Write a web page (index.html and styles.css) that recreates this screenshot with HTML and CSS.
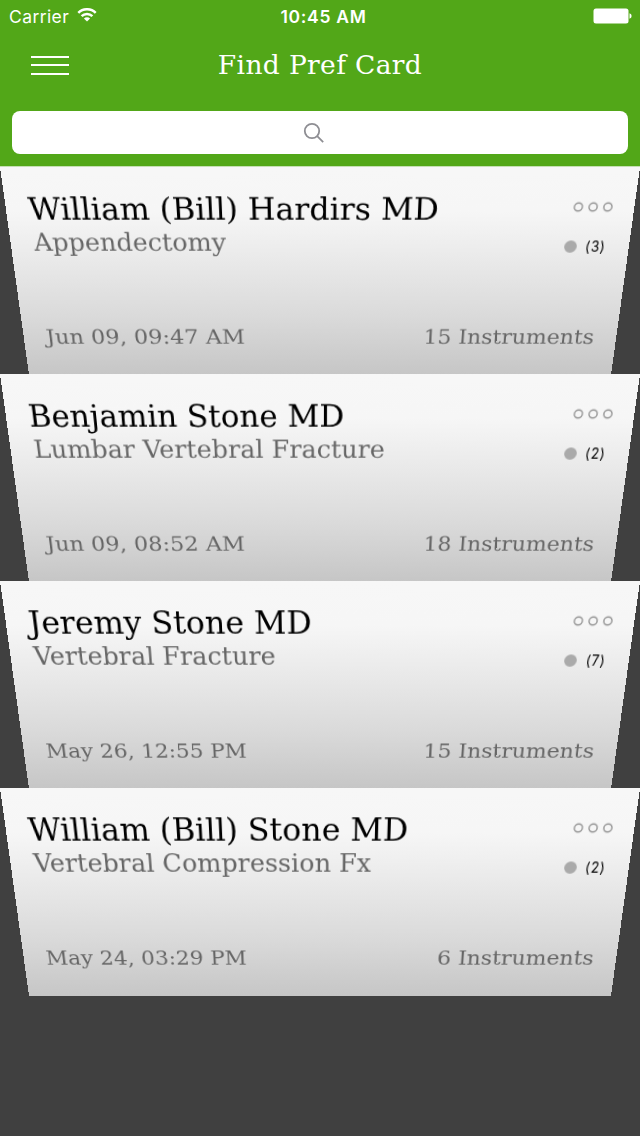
FILE: index.html
```
<!DOCTYPE html>
<html lang="en">
<head>
  <meta charset="UTF-8" />
  <meta name="viewport" content="width=device-width, initial-scale=1.0" />
  <title>Find Pref Card</title>
  <link rel="stylesheet" href="styles.css">
</head>
<body>
  <header class="header">
    <div class="status-bar">
      <div class="carrier">
        <span>Carrier</span>
        <svg class="wifi" viewBox="0 0 20 14" width="20" height="14">
          <path d="M1.3 4.8a12.4 12.4 0 0 1 17.4 0" />
          <path d="M4.6 8.1a7.7 7.7 0 0 1 10.8 0" />
          <path class="dot" d="M6.9 10.5a4.4 4.4 0 0 1 6.2 0L10 13.6z" />
        </svg>
      </div>
      <span class="time">10:45 AM</span>
      <div class="battery">
        <svg viewBox="0 0 39 16" width="39" height="16">
          <rect x="0.5" y="0.5" width="35" height="15" rx="2.5" />
          <path d="M36.5 5.2a2.9 2.9 0 0 1 0 5.6z" />
        </svg>
      </div>
    </div>
    <div class="nav-bar">
      <button class="menu"><span></span><span></span><span></span></button>
      <h1>Find Pref Card</h1>
    </div>
    <div class="search">
      <svg viewBox="0 0 22 22" width="22" height="22">
        <circle cx="9" cy="9" r="7.2" />
        <path d="M14.2 14.2l6 5.9" />
      </svg>
    </div>
  </header>

  <main class="cards">
    <article class="card">
      <div class="top">
        <h2>William (Bill) Hardirs MD</h2>
        <svg class="dots" viewBox="0 0 40 10" width="40" height="10">
          <ellipse cx="5" cy="5" rx="4.1" ry="3.7" />
          <ellipse cx="20" cy="5" rx="4.1" ry="3.7" />
          <ellipse cx="35" cy="5" rx="4.1" ry="3.7" />
        </svg>
      </div>
      <div class="middle">
        <p class="procedure">Appendectomy</p>
        <div class="count"><i></i><span>(3)</span></div>
      </div>
      <div class="bottom">
        <span class="date">Jun 09, 09:47 AM</span>
        <span class="instruments">15 Instruments</span>
      </div>
    </article>

    <article class="card">
      <div class="top">
        <h2>Benjamin Stone MD</h2>
        <svg class="dots" viewBox="0 0 40 10" width="40" height="10">
          <ellipse cx="5" cy="5" rx="4.1" ry="3.7" />
          <ellipse cx="20" cy="5" rx="4.1" ry="3.7" />
          <ellipse cx="35" cy="5" rx="4.1" ry="3.7" />
        </svg>
      </div>
      <div class="middle">
        <p class="procedure">Lumbar Vertebral Fracture</p>
        <div class="count"><i></i><span>(2)</span></div>
      </div>
      <div class="bottom">
        <span class="date">Jun 09, 08:52 AM</span>
        <span class="instruments">18 Instruments</span>
      </div>
    </article>

    <article class="card">
      <div class="top">
        <h2>Jeremy Stone MD</h2>
        <svg class="dots" viewBox="0 0 40 10" width="40" height="10">
          <ellipse cx="5" cy="5" rx="4.1" ry="3.7" />
          <ellipse cx="20" cy="5" rx="4.1" ry="3.7" />
          <ellipse cx="35" cy="5" rx="4.1" ry="3.7" />
        </svg>
      </div>
      <div class="middle">
        <p class="procedure">Vertebral Fracture</p>
        <div class="count"><i></i><span>(7)</span></div>
      </div>
      <div class="bottom">
        <span class="date">May 26, 12:55 PM</span>
        <span class="instruments">15 Instruments</span>
      </div>
    </article>

    <article class="card">
      <div class="top">
        <h2>William (Bill) Stone MD</h2>
        <svg class="dots" viewBox="0 0 40 10" width="40" height="10">
          <ellipse cx="5" cy="5" rx="4.1" ry="3.7" />
          <ellipse cx="20" cy="5" rx="4.1" ry="3.7" />
          <ellipse cx="35" cy="5" rx="4.1" ry="3.7" />
        </svg>
      </div>
      <div class="middle">
        <p class="procedure">Vertebral Compression Fx</p>
        <div class="count"><i></i><span>(2)</span></div>
      </div>
      <div class="bottom">
        <span class="date">May 24, 03:29 PM</span>
        <span class="instruments">6 Instruments</span>
      </div>
    </article>
  </main>
</body>
</html>
```
FILE: styles.css
```
html, body {
  height: 100%;
  margin: 0;
  padding: 0;
}

body {
  background: #404040;
  font-family: "DejaVu Serif", serif;
  overflow: hidden;
}

.header {
  height: 167px;
  background: #52a718;
  color: white;
  border-bottom: 1px solid #c5dfb4;
  box-sizing: border-box;
}

.status-bar {
  height: 32px;
  padding: 0 8px 0 9px;
  display: grid;
  grid-template-columns: 1fr auto 1fr;
  align-items: center;
  font-family: Inter, sans-serif;
  font-size: 17.5px;
}

.carrier {
  display: flex;
  align-items: center;
  gap: 8px;
  letter-spacing: 0.4px;
}

.wifi {
  margin-top: -2px;
  fill: none;
  stroke: white;
  stroke-width: 2.5;
}

.wifi .dot {
  fill: white;
  stroke: none;
}

.time {
  font-weight: 600;
  letter-spacing: 0.7px;
  padding-left: 6px;
}

.battery {
  display: flex;
  justify-content: flex-end;
  fill: white;
}

.nav-bar {
  height: 66px;
  display: grid;
  grid-template-columns: 100px 1fr 100px;
  align-items: center;
}

.menu {
  width: 38px;
  margin-left: 30.5px;
  padding: 0;
  border: none;
  background: none;
  display: flex;
  flex-direction: column;
  gap: 6.5px;
}

.menu span {
  height: 2px;
  background: white;
}

h1 {
  margin: 0;
  padding-bottom: 2px;
  text-align: center;
  font-size: 26.5px;
  font-weight: normal;
  letter-spacing: 0.35px;
}

.search {
  height: 43px;
  margin: 13px 12px 0;
  padding-right: 12px;
  box-sizing: border-box;
  background: white;
  border-radius: 8px;
  display: flex;
  align-items: center;
  justify-content: center;
}

.search svg {
  fill: none;
  stroke: #8e8e93;
  stroke-width: 1.8;
}

/* each card is tilted away from the viewer, hinged on its top edge */
.card {
  height: 207px;
  padding: 0 23px 0 22px;
  box-sizing: border-box;
  background: linear-gradient(#f7f7f7 0%, #f6f6f6 20%, #e8e8e8 45%, #dadada 70%, #c6c6c6 100%);
  transform: matrix3d(1, 0, 0, 0, 0, 1.1, 0, 0.00048, 0, 0, 1, 0, 0, 0, 0, 1);
  transform-origin: 50% 0;
  color: #666;
}

.card:last-child {
  height: 208px;
}

.top, .middle, .bottom {
  display: flex;
  justify-content: space-between;
}

.top {
  height: 60px;
}

h2 {
  margin: 0 0 0 1px;
  color: black;
  font-size: 29px;
  font-weight: normal;
  line-height: 78px;
  white-space: nowrap;
  transform: scaleX(1.11);
  transform-origin: 0 50%;
}

.card:nth-child(2) h2 {
  transform: scaleX(1.09);
}

.dots {
  margin: 32px -1px 0 0;
  fill: none;
  stroke: #999;
  stroke-width: 1.5;
}

.middle {
  height: 91px;
}

.procedure {
  margin: 0 0 0 2px;
  font-size: 24px;
  line-height: 22px;
  transform: scaleX(1.098);
  transform-origin: 0 50%;
}

.count {
  display: flex;
  align-items: center;
  gap: 9px;
  height: 29px;
  margin-right: 1px;
  color: black;
  font-family: Inter, sans-serif;
  font-size: 14px;
  letter-spacing: 0.8px;
}

.count i {
  width: 13px;
  height: 12px;
  border-radius: 50%;
  background: #aaa;
}

.bottom {
  font-size: 21px;
  line-height: 32px;
}

.date {
  margin-left: 2px;
  transform: scaleX(1.11);
  transform-origin: 0 50%;
}

.card:nth-child(-n + 2) .date {
  transform: scaleX(1.155);
}

.instruments {
  margin-right: 1px;
  transform: scaleX(1.13);
  transform-origin: 100% 50%;
}
```
